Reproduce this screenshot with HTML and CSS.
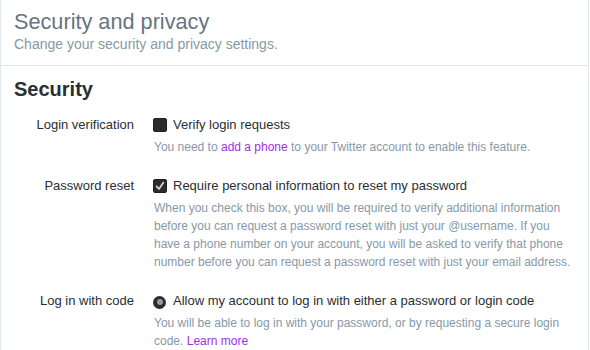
FILE: index.html
```html
<!DOCTYPE html>
<html lang="en">
<head>
<meta charset="utf-8">
<title>Security and privacy</title>
<link rel="stylesheet" href="styles.css">
</head>
<body>
<div class="card">
  <div class="header">
    <h1 class="title">Security and privacy</h1>
    <p class="subtitle">Change your security and privacy settings.</p>
  </div>
  <div class="section">
    <h2 class="heading">Security</h2>

    <div class="row">
      <div class="label">Login verification</div>
      <div class="control">
        <div class="option">
          <span class="box"></span>
          <span>Verify login requests</span>
        </div>
        <p class="desc">You need to <a class="link" href="#">add a phone</a> to your Twitter account to enable this feature.</p>
      </div>
    </div>

    <div class="row">
      <div class="label">Password reset</div>
      <div class="control">
        <div class="option">
          <span class="box checked"><svg viewBox="0 0 14 14" width="14" height="14"><path d="M3.6 7.4 L6 10 L10.4 3.6" fill="none" stroke="#d8d8d8" stroke-width="1.7" stroke-linecap="round" stroke-linejoin="round"/></svg></span>
          <span>Require personal information to reset my password</span>
        </div>
        <p class="desc">When you check this box, you will be required to verify additional information before you can request a password reset with just your @username. If you have a phone number on your account, you will be asked to verify that phone number before you can request a password reset with just your email address.</p>
      </div>
    </div>

    <div class="row">
      <div class="label">Log in with code</div>
      <div class="control">
        <div class="option">
          <span class="radio"><span class="dot"></span></span>
          <span>Allow my account to log in with either a password or login code</span>
        </div>
        <p class="desc">You will be able to log in with your password, or by requesting a secure login code. <a class="link" href="#">Learn more</a></p>
      </div>
    </div>
  </div>
</div>
</body>
</html>
```

FILE: styles.css
```css
html, body {
  margin: 0;
  padding: 0;
  background: #ffffff;
}

body {
  font-family: "Liberation Sans", Arial, sans-serif;
  color: #292f33;
}

.card {
  width: 587px;
  min-height: 350px;
  border-left: 1px solid #e1e8ed;
  border-right: 1px solid #e1e8ed;
  background: #ffffff;
}

.header {
  padding: 9px 13px 12px;
  border-bottom: 1px solid #e1e8ed;
}

.title {
  margin: 0;
  font-size: 21.7px;
  line-height: 26px;
  font-weight: normal;
  color: #66757f;
}

.subtitle {
  margin: 0;
  font-size: 14px;
  line-height: 18px;
  color: #8899a6;
}

.section {
  padding: 11px 10px 0 13px;
}

.heading {
  margin: 0 0 15px;
  font-size: 20px;
  line-height: 24px;
  font-weight: bold;
  color: #292f33;
}

.row {
  display: grid;
  grid-template-columns: 120px 1fr;
  column-gap: 19px;
  margin-bottom: 21px;
}

.label {
  text-align: right;
  font-size: 13px;
  line-height: 18px;
  color: #292f33;
}

.option {
  display: flex;
  align-items: center;
  font-size: 13px;
  line-height: 18px;
  color: #292f33;
}

.box {
  display: inline-block;
  flex: none;
  width: 14px;
  height: 14px;
  margin-right: 6px;
  border-radius: 2px;
  background: #2c2c2c;
  box-sizing: border-box;
  border: 1px solid #1f1f1f;
  position: relative;
}

.box svg {
  position: absolute;
  left: -1px;
  top: -1px;
}

.radio {
  display: inline-flex;
  flex: none;
  align-items: center;
  justify-content: center;
  width: 13px;
  height: 13px;
  margin: 2px 7px 0 0;
  border-radius: 50%;
  background: #2c2c2c;
}

.dot {
  width: 6px;
  height: 6px;
  border-radius: 50%;
  background: #9a9a9a;
}

.desc {
  margin: 4px 0 0 1px;
  font-size: 12px;
  line-height: 18px;
  color: #8899a6;
}

.link {
  color: #a12fe3;
  text-decoration: none;
}
```
